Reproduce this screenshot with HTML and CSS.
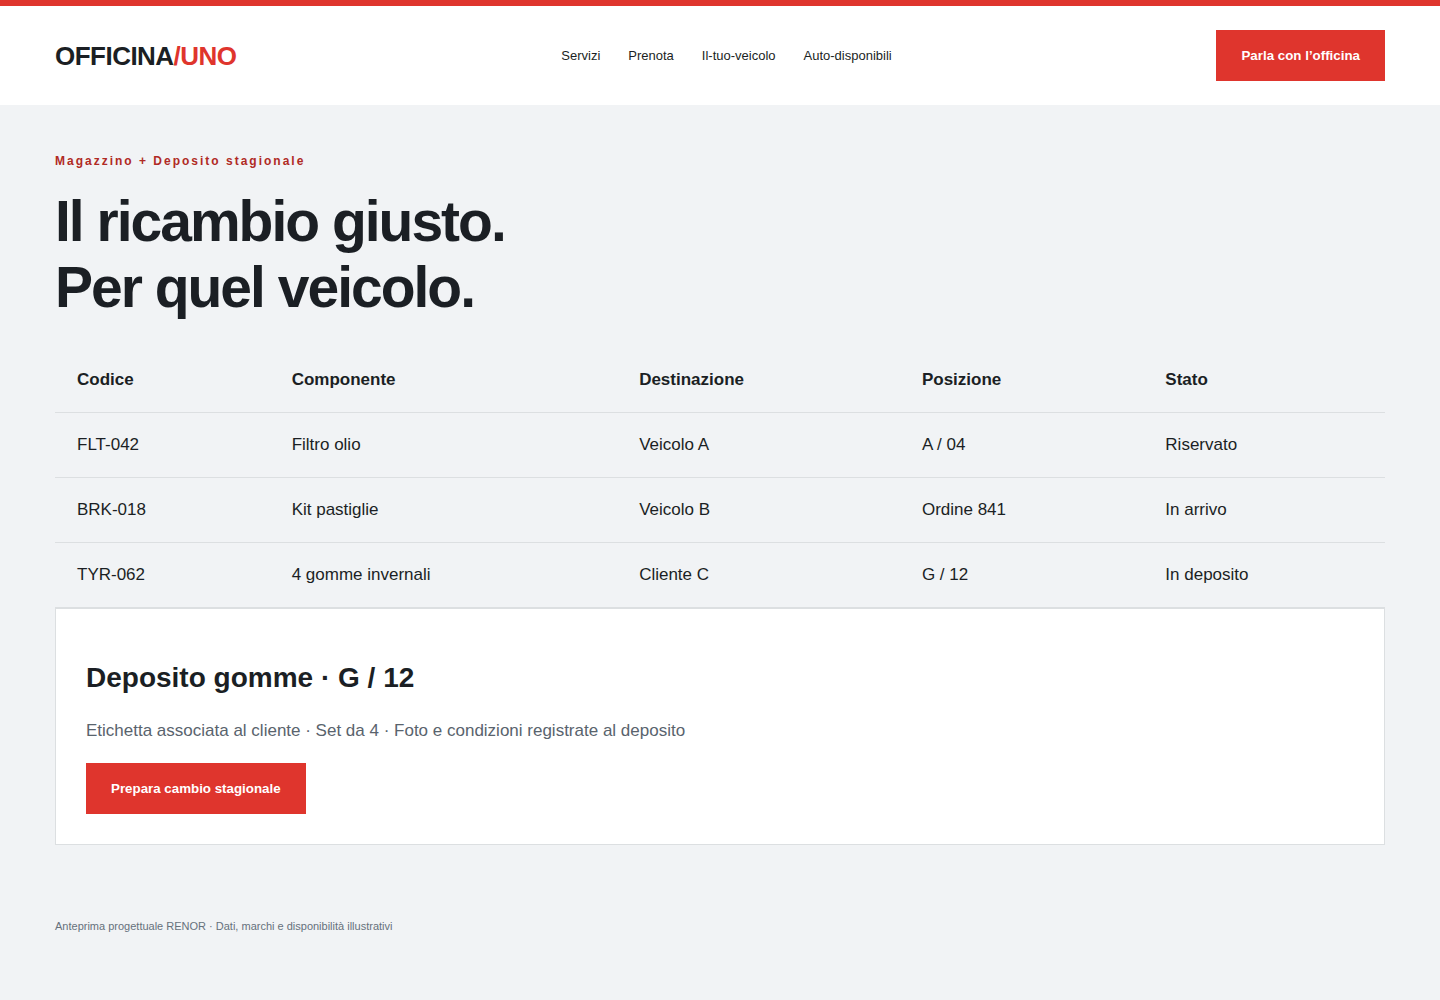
FILE: index.html
```html
<!DOCTYPE html>
<html lang="it">
<head>
<meta charset="utf-8">
<meta name="viewport" content="width=device-width, initial-scale=1">
<title>Officina/Uno – Magazzino</title>
<link rel="stylesheet" href="styles.css">
</head>
<body>
<header class="site-header">
  <a class="logo" href="#">OFFICINA<span class="logo-accent">/UNO</span></a>
  <nav class="site-nav">
    <a href="#">Servizi</a>
    <a href="#">Prenota</a>
    <a href="#">Il-tuo-veicolo</a>
    <a href="#">Auto-disponibili</a>
  </nav>
  <button class="button" type="button">Parla con l’officina</button>
</header>
<main class="content">
  <p class="eyebrow">Magazzino + Deposito stagionale</p>
  <h1 class="title">Il ricambio giusto.<br>Per quel veicolo.</h1>
  <table class="stock">
    <thead>
      <tr><th>Codice</th><th>Componente</th><th>Destinazione</th><th>Posizione</th><th>Stato</th></tr>
    </thead>
    <tbody>
      <tr><td>FLT-042</td><td>Filtro olio</td><td>Veicolo A</td><td>A / 04</td><td>Riservato</td></tr>
      <tr><td>BRK-018</td><td>Kit pastiglie</td><td>Veicolo B</td><td>Ordine 841</td><td>In arrivo</td></tr>
      <tr><td>TYR-062</td><td>4 gomme invernali</td><td>Cliente C</td><td>G / 12</td><td>In deposito</td></tr>
    </tbody>
  </table>
  <section class="card">
    <h2 class="card-title">Deposito gomme · G / 12</h2>
    <p class="card-text">Etichetta associata al cliente · Set da 4 · Foto e condizioni registrate al deposito</p>
    <button class="button" type="button">Prepara cambio stagionale</button>
  </section>
</main>
<footer class="site-footer">Anteprima progettuale RENOR · Dati, marchi e disponibilità illustrativi</footer>
</body>
</html>
```
FILE: styles.css
```css
* {
  box-sizing: border-box;
}

body {
  margin: 0;
  background: #f1f3f5;
  color: #1b1f24;
  font: 17px/26px "Liberation Sans", Arial, sans-serif;
}

.site-header {
  display: flex;
  align-items: center;
  justify-content: space-between;
  padding: 24px 55px;
  border-top: 6px solid #df352d;
  background: #fff;
}

.logo {
  color: inherit;
  font-size: 26px;
  font-weight: 700;
  letter-spacing: -0.02em;
  text-decoration: none;
}

.logo-accent {
  color: #df352d;
}

.site-nav {
  display: flex;
  gap: 28px;
  font-size: 13px;
}

.site-nav a {
  color: inherit;
  text-decoration: none;
}

.button {
  padding: 18px 25px;
  border: 0;
  background: #df352d;
  color: #fff;
  font-family: inherit;
  font-weight: 700;
}

.content {
  padding: 47px 55px 0;
}

.eyebrow {
  margin: 0 0 18px;
  color: #b02a24;
  font-size: 12px;
  line-height: 18px;
  font-weight: 700;
  letter-spacing: 2px;
}

.title {
  margin: 0 0 28px;
  font-size: 57px;
  line-height: 66px;
  letter-spacing: -2px;
}

.stock {
  width: 100%;
  border-collapse: collapse;
}

.stock th,
.stock td {
  padding: 19px 22px;
  border-bottom: 1px solid #dcdfe1;
  text-align: left;
}

.card {
  padding: 30px;
  border: 1px solid #dcdfe1;
  background: #fff;
}

.card-title {
  margin: 22px 0 23px;
  font-size: 28px;
  line-height: 34px;
}

.card-text {
  margin: 0 0 19px;
  color: #59636d;
}

.site-footer {
  padding: 72px 55px;
  color: #66717c;
  font-size: 11px;
  line-height: 18px;
}
```
